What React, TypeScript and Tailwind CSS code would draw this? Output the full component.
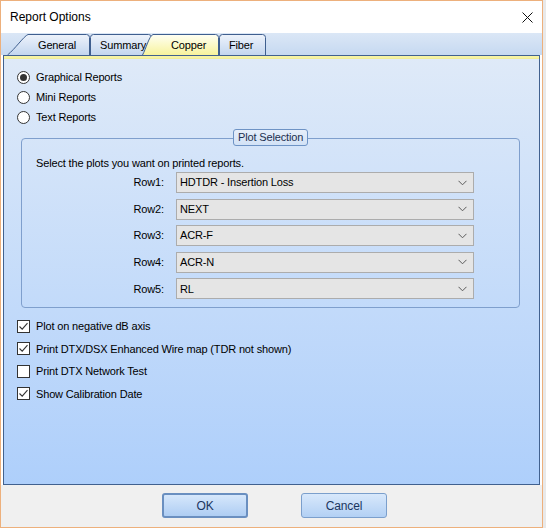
import React from 'react';

const FONT = { fontFamily: '"Liberation Sans", Arial, sans-serif', letterSpacing: '-0.15px' };

const ROWS = [
  { label: 'Row1:', value: 'HDTDR - Insertion Loss' },
  { label: 'Row2:', value: 'NEXT' },
  { label: 'Row3:', value: 'ACR-F' },
  { label: 'Row4:', value: 'ACR-N' },
  { label: 'Row5:', value: 'RL' },
];

const CHECKS = [
  { label: 'Plot on negative dB axis', checked: true },
  { label: 'Print DTX/DSX Enhanced Wire map (TDR not shown)', checked: true },
  { label: 'Print DTX Network Test', checked: false },
  { label: 'Show Calibration Date', checked: true },
];

const RADIOS = [
  { label: 'Graphical Reports', checked: true },
  { label: 'Mini Reports', checked: false },
  { label: 'Text Reports', checked: false },
];

// tab outline: optional slanted left side, rounded top-right corner
const TabShape = ({ w, slant, selected, id }: { w: number; slant: number; selected?: boolean; id: string }) => {
  const h = 21;
  const d = slant
    ? `M0.5 ${h} C${slant * 0.4} ${h - 6} ${slant - 3} 2 ${slant + 1} 0.5 L${w - 3.5} 0.5 Q${w - 0.5} 0.5 ${w - 0.5} 3.5 L${w - 0.5} ${h}`
    : `M0.5 ${h} L0.5 3.5 Q0.5 0.5 3.5 0.5 L${w - 3.5} 0.5 Q${w - 0.5} 0.5 ${w - 0.5} 3.5 L${w - 0.5} ${h}`;
  return (
    <svg className="absolute inset-0" width={w} height={h} viewBox={`0 0 ${w} ${h}`}>
      <defs>
        <linearGradient id={id} x1="0" y1="0" x2="0" y2="1">
          {selected ? (
            <>
              <stop offset="0" stopColor="#fffff4" />
              <stop offset="1" stopColor="#f7f39c" />
            </>
          ) : (
            <>
              <stop offset="0" stopColor="#eef3fb" />
              <stop offset="1" stopColor="#c3d6ef" />
            </>
          )}
        </linearGradient>
      </defs>
      <path d={d + ' Z'} fill={`url(#${id})`} stroke="none" />
      <path d={d} fill="none" stroke="#3f5f8f" strokeWidth="1" />
    </svg>
  );
};

const Tab = ({
  label,
  w,
  slant,
  pad,
  selected,
  id,
  className,
}: {
  label: string;
  w: number;
  slant: number;
  pad: number;
  selected?: boolean;
  id: string;
  className?: string;
}) => (
  <div className={`relative h-[21px] shrink-0 ${className ?? ''}`} style={{ width: w }}>
    <TabShape w={w} slant={slant} selected={selected} id={id} />
    <span className="relative block pt-[5px] text-[11px] leading-[13px] text-black" style={{ paddingLeft: pad }}>
      {label}
    </span>
  </div>
);

const Radio = ({ checked }: { checked: boolean }) => (
  <span className="flex h-[13px] w-[13px] shrink-0 items-center justify-center rounded-full border border-[#333] bg-white">
    {checked && <span className="h-[7px] w-[7px] rounded-full bg-[#333]" />}
  </span>
);

const Check = ({ checked }: { checked: boolean }) => (
  <span className="flex h-[13px] w-[13px] shrink-0 items-center justify-center border border-[#333] bg-white">
    {checked && (
      <svg width="11" height="11" viewBox="0 0 11 11">
        <path d="M1.5 5.5 L4.2 8.2 L9.5 2.2" fill="none" stroke="#333" strokeWidth="1.1" />
      </svg>
    )}
  </span>
);

const Chevron = () => (
  <svg width="9" height="6" viewBox="0 0 9 6">
    <path d="M0.5 0.8 L4.5 4.8 L8.5 0.8" fill="none" stroke="#5a5a5a" strokeWidth="1" />
  </svg>
);

export default function App() {
  return (
    <div className="relative h-[528px] w-[546px] overflow-hidden bg-[#e9e9e9]" style={FONT}>
      <div className="flex h-[528px] w-[543px] flex-col border border-[#edb07c] bg-white">
        {/* title bar */}
        <div className="flex h-[32px] shrink-0 items-center justify-between pl-[9px] pr-[9px]">
          <span className="text-[12px] tracking-normal text-black">Report Options</span>
          <svg width="11" height="11" viewBox="0 0 11 11">
            <path d="M0.5 0.5 L10.5 10.5 M10.5 0.5 L0.5 10.5" stroke="#111" strokeWidth="1" />
          </svg>
        </div>

        {/* tab strip */}
        <div className="flex h-[22px] shrink-0 items-end bg-gradient-to-b from-[#dbe7f6] to-[#c6d9f1] pl-[6px]">
          <Tab id="t1" label="General" w={83} slant={20} pad={31} />
          <Tab id="t2" label="Summary" w={62} slant={0} pad={10} />
          <Tab id="t3" label="Copper" w={77} slant={10} pad={29} selected className="z-10 -mb-[1px] -ml-[10px] h-[22px]" />
          <Tab id="t4" label="Fiber" w={47} slant={0} pad={10} />
        </div>

        {/* tab page */}
        <div className="mx-[2px] flex flex-1 flex-col border border-[#41618f] bg-gradient-to-b from-[#dfeaf8] to-[#aecffb]">
          <div className="h-[3px] shrink-0 border-b border-[#f1ee98] bg-[#f6f3a4]" />
          <div className="flex flex-col pl-[13px] pt-[8px]">
            {RADIOS.map((r) => (
              <div key={r.label} className="flex h-[20px] items-center gap-[6px] text-[11px] text-black">
                <Radio checked={r.checked} />
                <span>{r.label}</span>
              </div>
            ))}

            {/* Plot Selection group */}
            <div className="relative ml-[4px] mt-[11px] h-[170px] w-[499px] rounded-[4px] border border-[#7f9fcd] pl-[14px]">
              <div className="absolute left-[211px] top-[-10px] flex h-[17px] items-center rounded-[3px] border border-[#6e93c5] bg-gradient-to-b from-[#e6eefa] to-[#d2e2f6] px-[4px] text-[11px] text-[#1c2f4f]">
                Plot Selection
              </div>
              <div className="pt-[17px] text-[11px] leading-[14px] text-black">Select the plots you want on printed reports.</div>
              <div className="mt-[2px] flex flex-col gap-[5.6px]">
                {ROWS.map((row) => (
                  <div key={row.label} className="flex items-center">
                    <span className="w-[128px] text-right text-[11px] text-black">{row.label}</span>
                    <div className="ml-[12px] flex h-[21px] w-[298px] items-center justify-between border border-[#acacac] bg-[#e5e5e5] pl-[3px] pr-[6px] text-[11px] text-black">
                      <span>{row.value}</span>
                      <Chevron />
                    </div>
                  </div>
                ))}
              </div>
            </div>

            <div className="mt-[7px] flex flex-col">
              {CHECKS.map((c) => (
                <div key={c.label} className="flex h-[22.5px] items-center gap-[6px] text-[11px] text-black">
                  <Check checked={c.checked} />
                  <span>{c.label}</span>
                </div>
              ))}
            </div>
          </div>
        </div>

        {/* buttons */}
        <div className="flex h-[42px] shrink-0 items-center gap-[53px] bg-[#f0f0f0] pb-[1px] pl-[161px]">
          <button className="h-[25px] w-[86px] rounded-[3px] border-2 border-[#6a8fc0] bg-gradient-to-b from-[#d6e7fb] to-[#aecdf3] text-[12px] text-[#1b365f]">
            OK
          </button>
          <button className="h-[25px] w-[86px] rounded-[3px] border border-[#7b9fcc] bg-gradient-to-b from-[#d8e8fb] to-[#b2d0f4] text-[12px] text-[#1b365f]">
            Cancel
          </button>
        </div>
      </div>
    </div>
  );
}
